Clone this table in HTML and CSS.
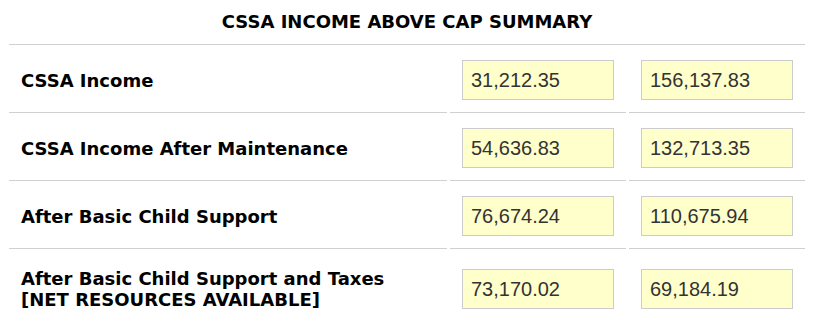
FILE: index.html
```html
<!DOCTYPE html>
<html>
<head>
<meta charset="utf-8">
<link rel="stylesheet" href="styles.css">
</head>
<body>
<div class="wrap">
<table class="summary">
  <colgroup>
    <col class="col-label">
    <col class="col-val">
    <col class="col-val">
  </colgroup>
  <thead>
    <tr><th colspan="3" class="title">CSSA INCOME ABOVE CAP SUMMARY</th></tr>
  </thead>
  <tbody>
    <tr>
      <td class="label">CSSA Income</td>
      <td class="val"><input class="box" type="text" value="31,212.35" readonly></td>
      <td class="val"><input class="box" type="text" value="156,137.83" readonly></td>
    </tr>
    <tr>
      <td class="label">CSSA Income After Maintenance</td>
      <td class="val"><input class="box" type="text" value="54,636.83" readonly></td>
      <td class="val"><input class="box" type="text" value="132,713.35" readonly></td>
    </tr>
    <tr>
      <td class="label">After Basic Child Support</td>
      <td class="val"><input class="box" type="text" value="76,674.24" readonly></td>
      <td class="val"><input class="box" type="text" value="110,675.94" readonly></td>
    </tr>
    <tr>
      <td class="label">After Basic Child Support and Taxes<br>[NET RESOURCES AVAILABLE]</td>
      <td class="val"><input class="box" type="text" value="73,170.02" readonly></td>
      <td class="val"><input class="box" type="text" value="69,184.19" readonly></td>
    </tr>
  </tbody>
</table>
</div>
</body>
</html>
```
FILE: styles.css
```css
html, body {
  margin: 0;
  padding: 0;
  background: #ffffff;
}
.wrap {
  padding-left: 6px;
}
.summary {
  width: 802px;
  border-collapse: separate;
  border-spacing: 3px;
  table-layout: fixed;
  font-family: "DejaVu Sans", Verdana, sans-serif;
  font-weight: bold;
  font-size: 18px;
  line-height: 21px;
  color: #000;
}
.col-label { width: 438px; }
.col-val { width: 176px; }
.summary th,
.summary td {
  border-bottom: 1px solid #d0d0d0;
}
.title {
  text-align: center;
  padding: 8px 12px 12px;
  font-weight: bold;
}
.label {
  padding: 16px 12px;
  vertical-align: middle;
  text-align: left;
}
.val {
  padding: 12px 12px;
  vertical-align: middle;
  font-size: 0;
  line-height: 0;
}
.box {
  box-sizing: border-box;
  width: 152px;
  height: 40px;
  margin: 0;
  padding: 0 8px;
  border: 1px solid #cccccc;
  background: #ffffcc;
  color: #333333;
  font-family: "Liberation Sans", Arial, sans-serif;
  font-size: 20px;
  font-weight: normal;
  outline: none;
}
```
